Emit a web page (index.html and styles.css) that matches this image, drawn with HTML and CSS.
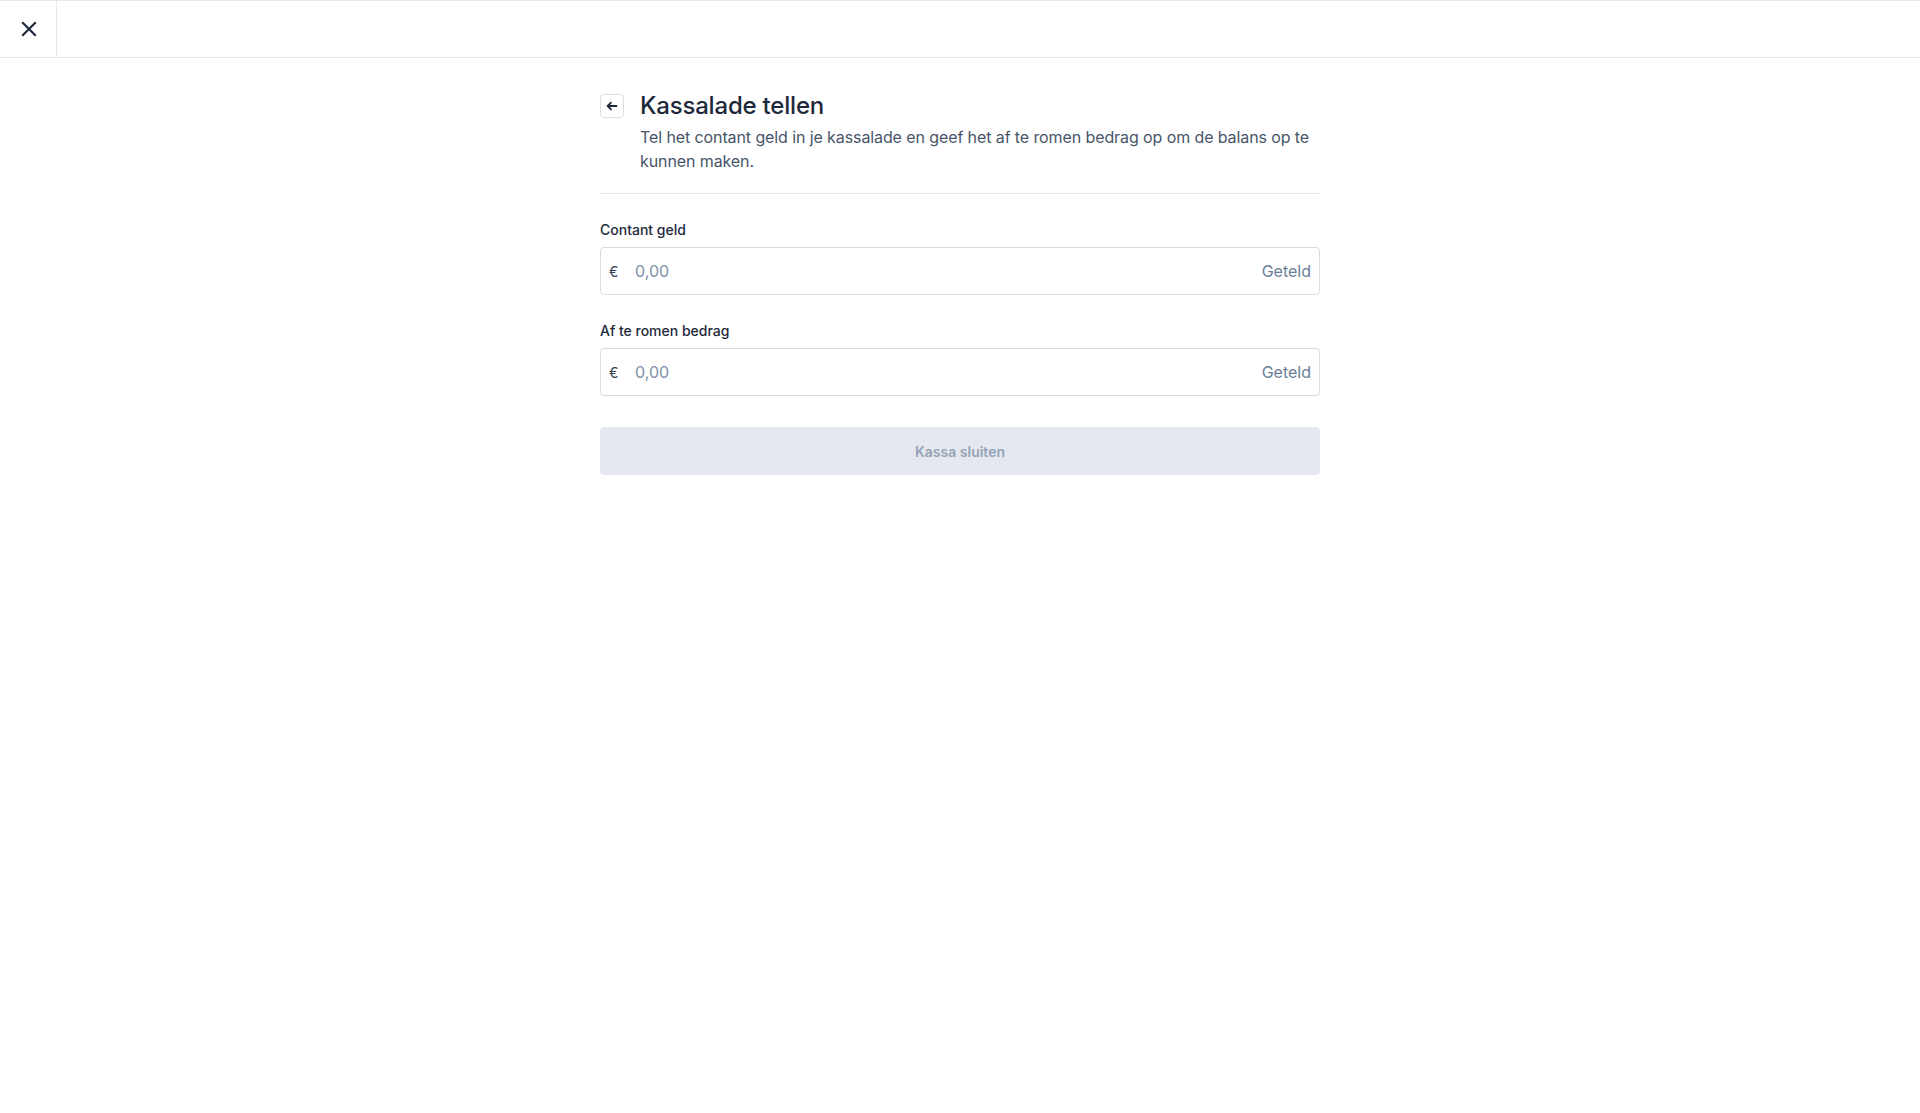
FILE: index.html
```html
<!DOCTYPE html>
<html lang="nl">
<head>
  <meta charset="UTF-8">
  <meta name="viewport" content="width=device-width, initial-scale=1.0">
  <title>Kassalade tellen</title>
  <link rel="stylesheet" href="styles.css">
</head>
<body>

  <div class="topbar">
    <button class="close-btn" type="button" aria-label="Sluiten">
      <svg width="16" height="16" viewBox="0 0 16 16" fill="none" stroke="#1e293b" stroke-width="2.2" stroke-linecap="square">
        <path d="M2 2 L14 14 M14 2 L2 14"/>
      </svg>
    </button>
  </div>

  <div class="content">
    <div class="header">
      <button class="back-btn" type="button" aria-label="Terug">
        <svg width="12" height="12" viewBox="0 0 12 12" fill="none" stroke="#1e293b" stroke-width="1.8" stroke-linecap="round" stroke-linejoin="round">
          <path d="M10.5 6 H1.8 M5 2.6 L1.6 6 L5 9.4"/>
        </svg>
      </button>
      <div class="header-text">
        <h1>Kassalade tellen</h1>
        <p>Tel het contant geld in je kassalade en geef het af te romen bedrag op om de balans op te kunnen maken.</p>
      </div>
    </div>

    <form id="formKassa">
      <div class="field">
        <label for="contant">Contant geld</label>
        <div class="money-input">
          <span class="currency">€</span>
          <input type="text" id="contant" placeholder="0,00">
          <span class="suffix">Geteld</span>
        </div>
      </div>

      <div class="field">
        <label for="afromen">Af te romen bedrag</label>
        <div class="money-input">
          <span class="currency">€</span>
          <input type="text" id="afromen" placeholder="0,00">
          <span class="suffix">Geteld</span>
        </div>
      </div>

      <button type="submit" class="submit-btn" disabled>Kassa sluiten</button>
    </form>
  </div>

</body>
</html>
```

FILE: styles.css
```css
* {
  box-sizing: border-box;
}
body {
  margin: 0;
  font-family: Inter, "Noto Sans", Arial, sans-serif;
  background-color: #ffffff;
  color: #1e293b;
}
.topbar {
  display: flex;
  height: 58px;
  border-top: 1px solid #e5e8ec;
  border-bottom: 1px solid #e5e8ec;
}
.close-btn {
  width: 57px;
  height: 100%;
  display: flex;
  align-items: center;
  justify-content: center;
  background: none;
  border: none;
  border-right: 1px solid #e5e8ec;
  padding: 0 0 0 1px;
  cursor: pointer;
}
.content {
  width: 720px;
  margin: 32px auto 0;
}
.header {
  display: flex;
  gap: 16px;
  padding-bottom: 20px;
  border-bottom: 1px solid #e5e8ec;
}
.back-btn {
  flex: none;
  width: 24px;
  height: 24px;
  margin-top: 4px;
  display: flex;
  align-items: center;
  justify-content: center;
  padding: 0;
  background: #fff;
  border: 1px solid #d8dee6;
  border-radius: 4px;
  cursor: pointer;
}
.header-text h1 {
  margin: 0;
  font-size: 24px;
  line-height: 32px;
  font-weight: 500;
  color: #1e293b;
  letter-spacing: -0.2px;
}
.header-text p {
  margin: 3px 0 0;
  font-size: 16px;
  line-height: 24px;
  color: #475569;
  letter-spacing: -0.1px;
}
.field {
  margin-top: 26px;
  display: flex;
  flex-direction: column;
  gap: 7px;
}
.field label {
  font-size: 14px;
  line-height: 20px;
  font-weight: 500;
  color: #1e293b;
}
.money-input {
  display: flex;
  align-items: center;
  height: 48px;
  padding: 0 8px 0 8px;
  border: 1px solid #d5dce5;
  border-radius: 4px;
}
.currency {
  font-size: 14px;
  color: #334155;
  width: 10px;
}
.money-input input {
  flex: 1;
  border: none;
  outline: none;
  padding: 0 0 0 16px;
  font-family: inherit;
  font-size: 16px;
  color: #1e293b;
  background: transparent;
}
.money-input input::placeholder {
  color: #7d8fa7;
}
.suffix {
  font-size: 16px;
  color: #6b7e97;
}
.submit-btn {
  margin-top: 31px;
  width: 100%;
  height: 48px;
  border: none;
  border-radius: 4px;
  background-color: #e5e9ef;
  color: #94a3b8;
  font-family: inherit;
  font-size: 14px;
  font-weight: 600;
}
```
